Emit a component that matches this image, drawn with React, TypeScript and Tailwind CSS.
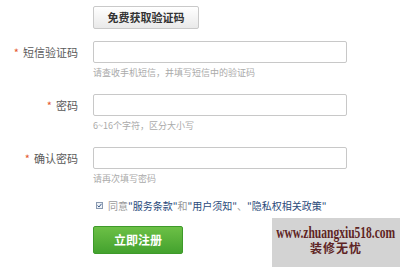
const FONT = { fontFamily: '"Noto Sans CJK SC", "Noto Sans", sans-serif' };

function Field({ label, hint }: { label: string; hint: string }) {
  return (
    <div className="flex flex-col">
      <div className="flex items-center h-[22px]">
        <div className="w-[80px] pr-[2px] text-right text-[11px] text-[#5a5a5a]">
          <span className="text-[#e4572e] mr-[4px]">*</span>
          {label}
        </div>
        <input className="ml-[13px] w-[254px] h-[22px] border border-[#c8c8c8] rounded-[2px] bg-white outline-none" />
      </div>
      <div className="ml-[93px] mt-[2px] h-[16px] text-[9px] leading-[16px] text-[#aaa]">{hint}</div>
    </div>
  );
}

export default function App() {
  return (
    <div className="relative w-[400px] h-[267px] bg-white overflow-hidden" style={FONT}>
      <div className="pt-[3px] pl-[93px]">
        <button className="w-[106px] h-[23px] border border-[#c9c9c9] rounded-[2px] bg-gradient-to-b from-[#ffffff] to-[#e9e9e9] text-[11px] text-[#333] font-bold">
          免费获取验证码
        </button>
      </div>
      <div className="mt-[12px] flex flex-col gap-[13px]">
        <Field label="短信验证码" hint="请查收手机短信，并填写短信中的验证码" />
        <Field label="密码" hint="6~16个字符，区分大小写" />
        <Field label="确认密码" hint="请再次填写密码" />
      </div>
      <div className="mt-[12px] ml-[96px] flex items-center h-[14px] text-[10px]">
        <span className="w-[7px] h-[7px] border border-[#8a9ab0] bg-[#eef2f7] flex items-center justify-center">
          <svg width="5" height="5" viewBox="0 0 5 5"><path d="M0.5 2.5 L2 4 L4.5 0.8" stroke="#3a5a8a" strokeWidth="1" fill="none" /></svg>
        </span>
        <span className="ml-[5px] text-[#999]">同意</span>
        <span className="text-[#2a4a7a]">"服务条款"</span>
        <span className="text-[#999]">和</span>
        <span className="text-[#2a4a7a]">"用户须知"</span>
        <span className="text-[#999]">、</span>
        <span className="text-[#2a4a7a]">"隐私权相关政策"</span>
      </div>
      <div className="mt-[13px] ml-[93px]">
        <button className="w-[90px] h-[28px] rounded-[2px] border border-[#3e9a2a] bg-gradient-to-b from-[#6cc046] to-[#43a22e] text-white text-[12px] font-bold">
          立即注册
        </button>
      </div>
      <div className="absolute left-[272px] top-[218px] w-[128px] h-[49px] bg-[#d3d3d3] flex flex-col items-center pt-[7px] leading-none" style={{ fontFamily: '"Liberation Serif", "Noto Sans CJK SC", serif' }}>
        <div className="text-[16px] font-bold text-[#5e2424] scale-x-[0.72] whitespace-nowrap">www.zhuangxiu518.com</div>
        <div className="mt-[2px] text-[12px] font-bold text-[#5e2424] tracking-[1px]">装修无忧</div>
      </div>
    </div>
  );
}
